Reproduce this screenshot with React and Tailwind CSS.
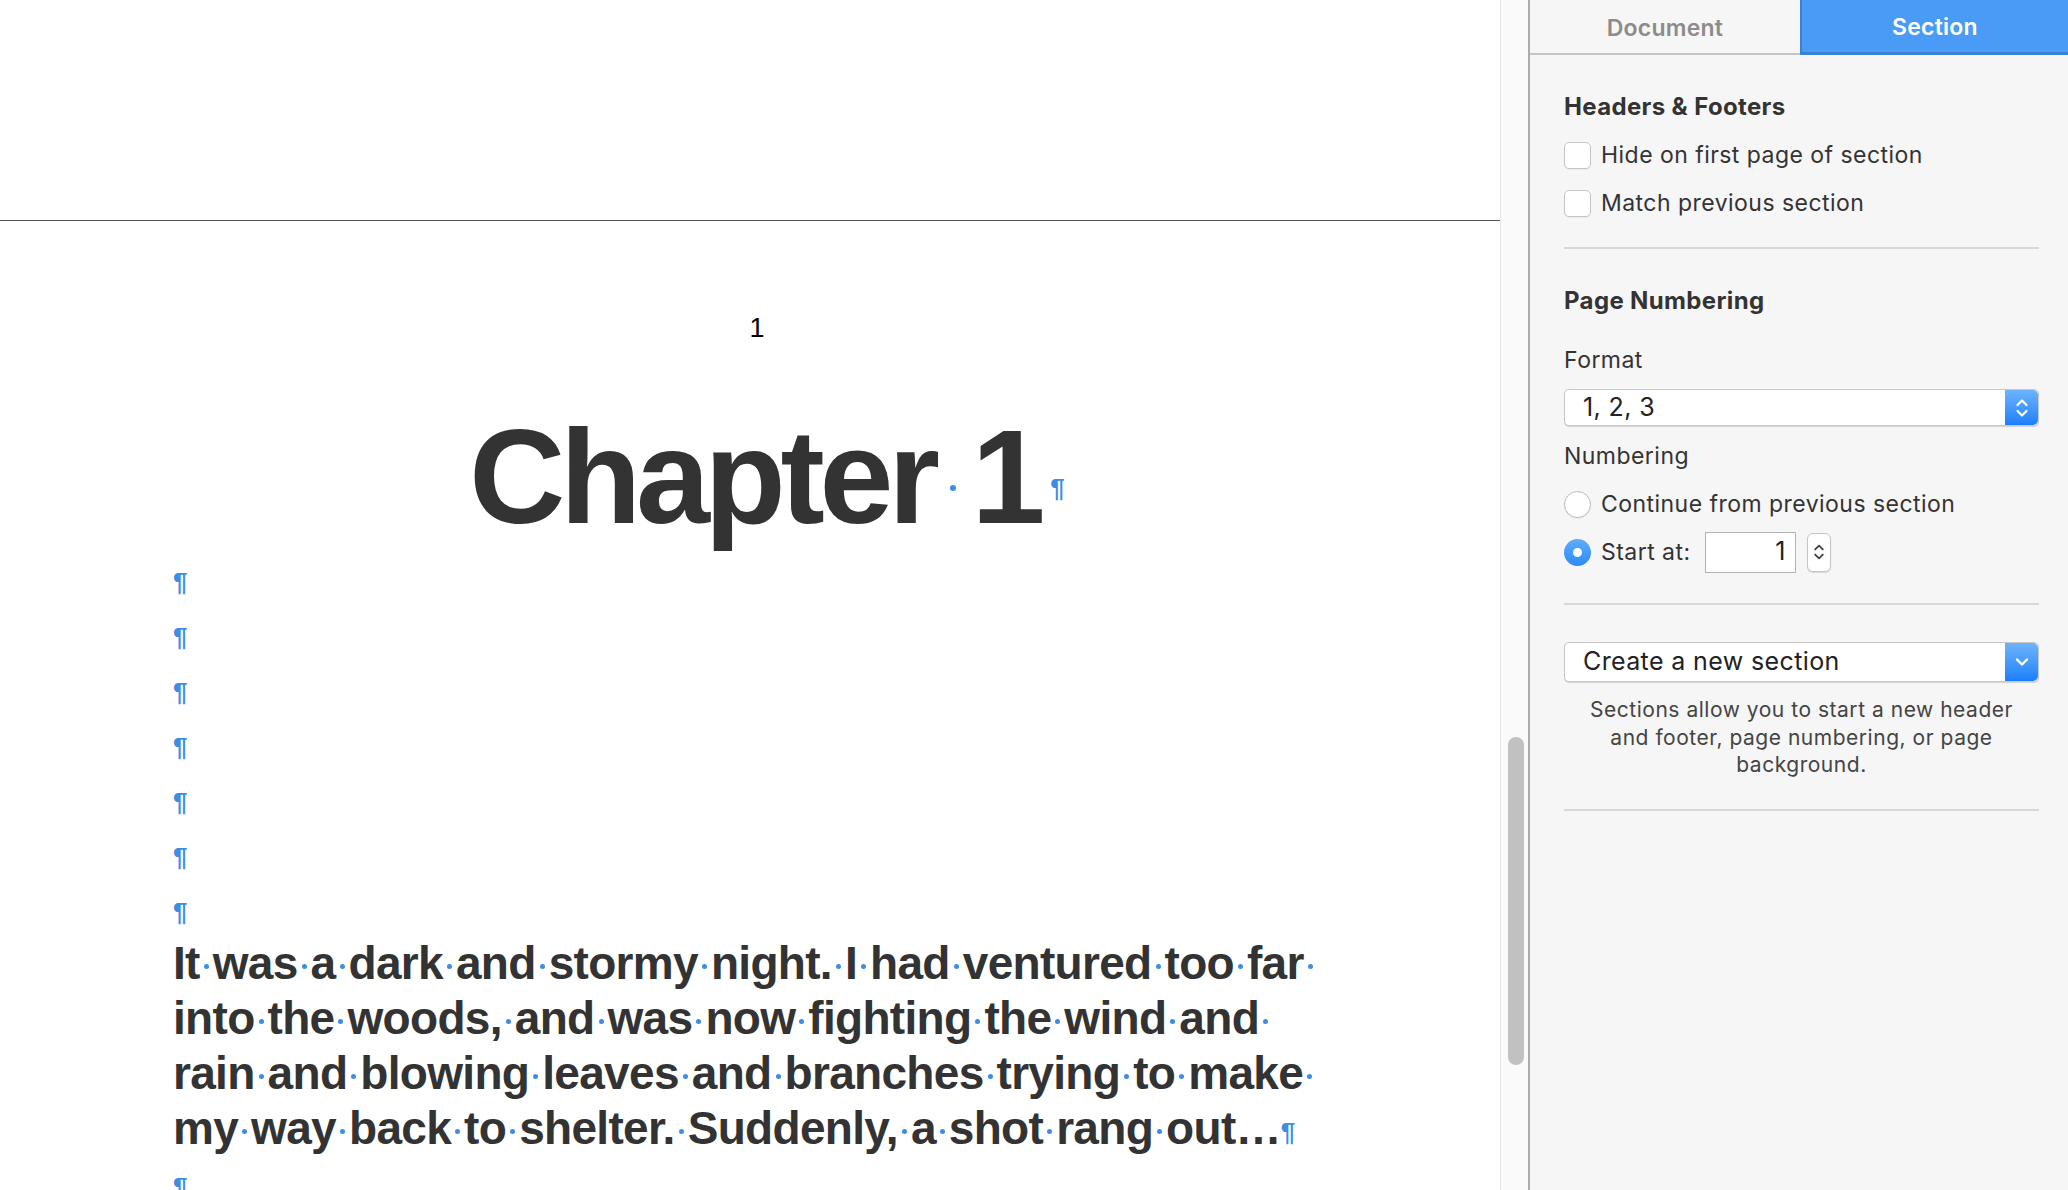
import React from "react";

const bodyLines = [
  ["It", "was", "a", "dark", "and", "stormy", "night.", "I", "had", "ventured", "too", "far"],
  ["into", "the", "woods,", "and", "was", "now", "fighting", "the", "wind", "and"],
  ["rain", "and", "blowing", "leaves", "and", "branches", "trying", "to", "make"],
  ["my", "way", "back", "to", "shelter.", "Suddenly,", "a", "shot", "rang", "out…"],
];

// invisible-character markers (space dot and paragraph mark)
const Dot = ({ big }) => (
  <span className={big ? "inline-flex w-[37px] justify-center align-middle" : "inline-flex w-[13px] justify-center align-middle"}>
    <span className={big ? "block h-[6px] w-[6px] rounded-full bg-[#3d8ce6]" : "block h-[5px] w-[5px] rounded-full bg-[#3d8ce6]"} />
  </span>
);

const Pilcrow = ({ className = "" }) => (
  <span className={"inline-block align-middle text-[26px] leading-[22px] font-bold tracking-normal text-[#3d8ce6] " + className}>¶</span>
);

const UpDown = ({ color = "white", small }) => (
  <svg width={small ? 12 : 14} height={small ? 22 : 26} viewBox="0 0 14 26" fill="none">
    <path d="M2.5 10 L7 5.5 L11.5 10" stroke={color} strokeWidth="2.2" strokeLinecap="round" strokeLinejoin="round" />
    <path d="M2.5 16 L7 20.5 L11.5 16" stroke={color} strokeWidth="2.2" strokeLinecap="round" strokeLinejoin="round" />
  </svg>
);

const ChevronDown = () => (
  <svg width="16" height="12" viewBox="0 0 16 12" fill="none">
    <path d="M3 3.5 L8 8.5 L13 3.5" stroke="white" strokeWidth="2.4" strokeLinecap="round" strokeLinejoin="round" />
  </svg>
);

const Checkbox = ({ label }) => (
  <div className="flex h-[48px] items-center gap-[10px]">
    <span className="h-[27px] w-[27px] rounded-[5px] border border-[#c6c6c6] bg-white shadow-[0_1px_1px_rgba(0,0,0,0.05)]" />
    <span className="text-[23px] tracking-[0.02em] text-[#333]">{label}</span>
  </div>
);

const Select = ({ value, height, icon }) => (
  <div className={"flex items-stretch rounded-[5px] border border-[#c8c8c8] bg-white shadow-[0_1px_1px_rgba(0,0,0,0.15)] " + height}>
    <div className="flex flex-1 items-center pl-[18px] text-[25px] tracking-[0.015em] text-[#222]">{value}</div>
    <div className="flex w-[33px] items-center justify-center rounded-r-[5px] bg-linear-to-b from-[#6cb4fb] to-[#1a7ffa]">{icon}</div>
  </div>
);

const Doc = () => (
  <div className="flex h-[1190px] w-[1500px] flex-col overflow-hidden bg-white font-['Liberation_Sans',Arial,sans-serif] text-[#333]">
    <div className="h-[221px] shrink-0 border-b border-[#555]" />
    <div className="pl-[173px] pr-[163px]">
      <div className="mt-[91px] pl-[4px] text-center text-[27px] leading-[32px] text-black">1</div>
      <div className="mt-[59px] text-center text-[133px] leading-[148px] font-bold tracking-[-0.04em]">
        Chapter<Dot big />1<Pilcrow className="ml-[10px] -mr-[24px]" />
      </div>
      <div className="text-[46px] leading-[55px] font-bold tracking-[-0.015em]">
        {[0, 1, 2, 3, 4, 5, 6].map((i) => (
          <div key={i} className="h-[55px]">
            <Pilcrow />
          </div>
        ))}
        {bodyLines.map((words, li) => (
          <div key={li} className="h-[55px] whitespace-nowrap">
            {words.map((w, i) => (
              <React.Fragment key={i}>
                {i > 0 && <Dot />}
                {w}
              </React.Fragment>
            ))}
            {li < 3 ? <Dot /> : <Pilcrow />}
          </div>
        ))}
        <div className="h-[55px]">
          <Pilcrow />
        </div>
      </div>
    </div>
  </div>
);

const Scrollbar = () => (
  <div className="h-[1190px] w-[28px] shrink-0 border-l border-[#e6e6e6] bg-[#fafafa] pl-[7px] pt-[737px]">
    <div className="h-[328px] w-[16px] rounded-full bg-[#c1c1c1]" />
  </div>
);

const Sidebar = () => (
  <div className="flex h-[1190px] flex-1 flex-col border-l-2 border-[#ababab] bg-[#f6f6f6] font-['Inter',sans-serif] text-[#333]">
    <div className="flex h-[55px] shrink-0">
      <div className="flex w-[270px] items-center justify-center border-b-2 border-[#c3c6c9] pt-[3px] text-[23px] font-semibold tracking-[0.01em] text-[#8c8c8c]">
        Document
      </div>
      <div className="flex flex-1 items-center justify-center border-b-[3px] border-l-2 border-[#3b80d2] bg-[#4a9bf5] pt-[3px] text-[23px] font-semibold tracking-[0.01em] text-white">
        Section
      </div>
    </div>

    <div className="flex flex-col pl-[34px] pr-[29px]">
      <div className="mt-[35px] flex h-[34px] items-center text-[24px] font-bold tracking-[0.015em]">Headers &amp; Footers</div>
      <div className="mt-[7px]">
        <Checkbox label="Hide on first page of section" />
        <Checkbox label="Match previous section" />
      </div>
      <div className="mt-[20px] h-[2px] bg-[#d8d8d8]" />

      <div className="mt-[35px] flex h-[34px] items-center text-[24px] font-bold tracking-[0.015em]">Page Numbering</div>
      <div className="mt-[25px] flex h-[34px] items-center text-[23px] tracking-[0.02em]">Format</div>
      <div className="mt-[12px]">
        <Select value="1, 2, 3" height="h-[37px]" icon={<UpDown />} />
      </div>
      <div className="mt-[13px] flex h-[34px] items-center text-[23px] tracking-[0.02em]">Numbering</div>
      <div className="mt-[7px] flex h-[48px] items-center gap-[10px]">
        <span className="h-[27px] w-[27px] rounded-full border border-[#bcbcbc] bg-white shadow-[0_1px_1px_rgba(0,0,0,0.06)]" />
        <span className="text-[23px] tracking-[0.02em]">Continue from previous section</span>
      </div>
      <div className="flex h-[48px] items-center">
        <span className="flex h-[27px] w-[27px] items-center justify-center rounded-full bg-linear-to-b from-[#5fadfc] to-[#2a8afb]">
          <span className="h-[9px] w-[9px] rounded-full bg-white" />
        </span>
        <span className="ml-[10px] text-[23px] tracking-[0.02em]">Start at:</span>
        <div className="ml-[14px] flex h-[41px] w-[91px] items-center justify-end border border-[#b3b3b3] bg-white pr-[9px] text-[25px] text-[#222]">
          1
        </div>
        <div className="ml-[11px] flex h-[39px] w-[24px] items-center justify-center rounded-[6px] border border-[#c6c6c6] bg-white shadow-[0_1px_1px_rgba(0,0,0,0.12)]">
          <UpDown color="#444" small />
        </div>
      </div>
      <div className="mt-[27px] h-[2px] bg-[#d8d8d8]" />

      <div className="mt-[37px]">
        <Select value="Create a new section" height="h-[40px]" icon={<ChevronDown />} />
      </div>
      <p className="mt-[14px] px-[14px] text-center text-[21px] leading-[27.5px] tracking-[0.025em] text-[#444]">
        Sections allow you to start a new header and footer, page numbering, or page background.
      </p>
      <div className="mt-[30px] h-[2px] bg-[#d8d8d8]" />
    </div>
  </div>
);

export default function App() {
  return (
    <div className="flex h-[1190px] w-[2068px] overflow-hidden">
      <Doc />
      <Scrollbar />
      <Sidebar />
    </div>
  );
}
